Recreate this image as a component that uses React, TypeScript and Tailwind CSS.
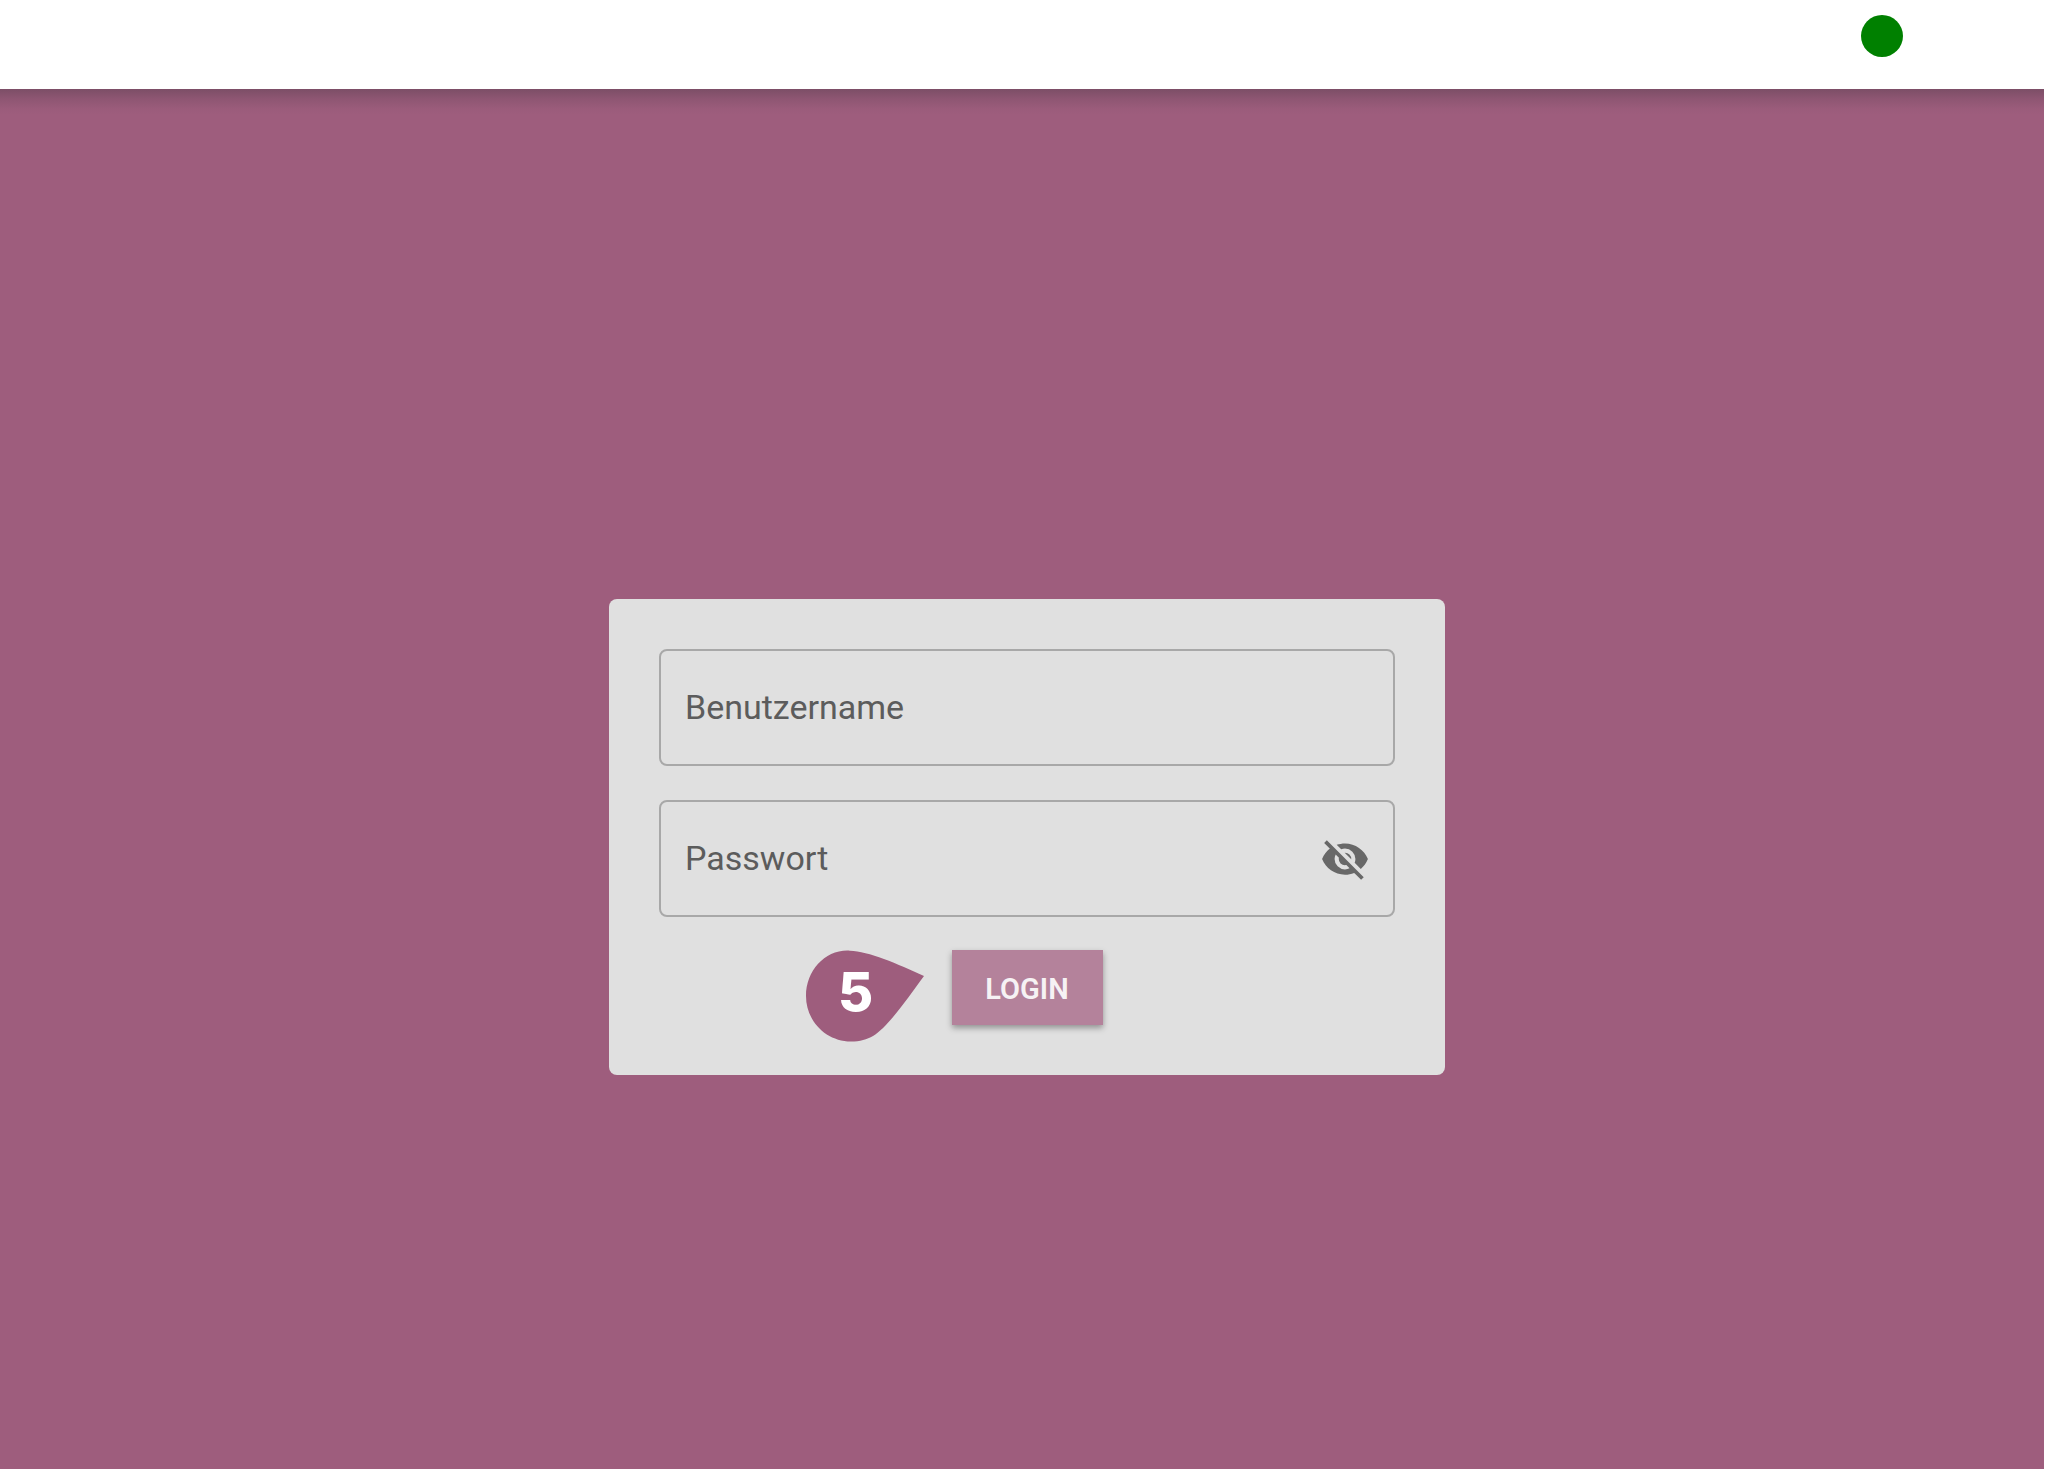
import { useState } from "react";

function EyeOffIcon() {
  return (
    <svg viewBox="0 0 24 24" className="size-[50px]" fill="currentColor" aria-hidden="true">
      <path d="M11.83,9L15,12.16C15,12.11 15,12.05 15,12A3,3 0 0,0 12,9C11.94,9 11.89,9 11.83,9M7.53,9.8L9.08,11.35C9.03,11.56 9,11.77 9,12A3,3 0 0,0 12,15C12.22,15 12.44,14.97 12.65,14.92L14.2,16.47C13.53,16.8 12.79,17 12,17A5,5 0 0,1 7,12C7,11.21 7.2,10.47 7.53,9.8M2,4.27L4.28,6.55L4.73,7C3.08,8.3 1.78,10 1,12C2.73,16.39 7,19.5 12,19.5C13.55,19.5 15.03,19.2 16.38,18.66L16.81,19.08L19.73,22L21,20.73L3.27,3M12,7A5,5 0 0,1 17,12C17,12.64 16.87,13.26 16.64,13.82L19.57,16.75C21.07,15.5 22.27,13.86 23,12C21.27,7.61 17,4.5 12,4.5C10.6,4.5 9.26,4.75 8,5.2L10.17,7.35C10.74,7.13 11.35,7 12,7Z" />
    </svg>
  );
}

function StepMarker() {
  return (
    <div className="absolute top-0 right-full mr-7 h-[92px] w-[118px]">
      <svg viewBox="0 0 118 92" className="size-full" fill="#9e5d7d" aria-hidden="true">
        <path d="M118 26C92 14 62 1 44 0.700C20 -1 0 20 0 46C0 71 20 91.500 45 91.500C54 91.500 61 89.500 67 86C82 77 101 49 118 26Z" />
      </svg>
      <span className="absolute inset-y-0 left-0 flex w-[100px] items-center justify-center pb-2 font-['Inter',sans-serif] text-[54px] leading-none font-extrabold text-white">
        5
      </span>
    </div>
  );
}

export default function App() {
  const [visible, setVisible] = useState(false);

  return (
    <div className="flex min-h-screen flex-col bg-white pr-px font-['Roboto',sans-serif]">
      <header className="flex h-[89px] items-start justify-end bg-white pt-[15px] pr-[141px]">
        <span role="status" aria-label="Online" className="size-[42px] rounded-full bg-[#008000]" />
      </header>
      <main className="flex flex-1 items-center justify-center bg-[#9e5d7d] bg-[linear-gradient(to_bottom,rgba(60,50,60,0.35),rgba(60,50,60,0.16)_10px,rgba(60,50,60,0.03)_20px,transparent_26px)] pt-[116px] pl-[10px]">
        <form
          className="flex w-full max-w-[836px] flex-col gap-[33px] rounded-lg bg-[#e0e0e0] p-[50px]"
          onSubmit={(e) => e.preventDefault()}
        >
          <div className="flex flex-col gap-[34px]">
            <div className="relative flex h-[117px] rounded-lg border-2 border-[#a8a8a8]">
              <input
                id="username"
                type="text"
                placeholder=" "
                className="peer min-w-0 flex-1 bg-transparent px-6 text-[34px] text-[#5c5c5c] outline-none"
              />
              <label
                htmlFor="username"
                className="pointer-events-none absolute inset-y-0 left-6 hidden items-center text-[34px] text-[#5c5c5c] peer-placeholder-shown:flex"
              >
                Benutzername
              </label>
            </div>
            <div className="relative flex h-[117px] items-center rounded-lg border-2 border-[#a8a8a8] pr-[23px]">
              <input
                id="password"
                type={visible ? "text" : "password"}
                placeholder=" "
                className="peer h-full min-w-0 flex-1 bg-transparent px-6 text-[34px] text-[#5c5c5c] outline-none"
              />
              <label
                htmlFor="password"
                className="pointer-events-none absolute inset-y-0 left-6 hidden items-center text-[34px] text-[#5c5c5c] peer-placeholder-shown:flex"
              >
                Passwort
              </label>
              <button
                type="button"
                aria-label="Passwort anzeigen"
                onClick={() => setVisible(!visible)}
                className="text-[#686868]"
              >
                <EyeOffIcon />
              </button>
            </div>
          </div>
          <div className="relative self-center">
            <StepMarker />
            <button
              type="submit"
              className="h-[75px] w-[151px] bg-[#b4829b] pt-1 text-[29px] font-semibold text-[#f6f2f4] shadow-[0_3px_6px_rgba(0,0,0,0.35)]"
            >
              LOGIN
            </button>
          </div>
        </form>
      </main>
    </div>
  );
}
